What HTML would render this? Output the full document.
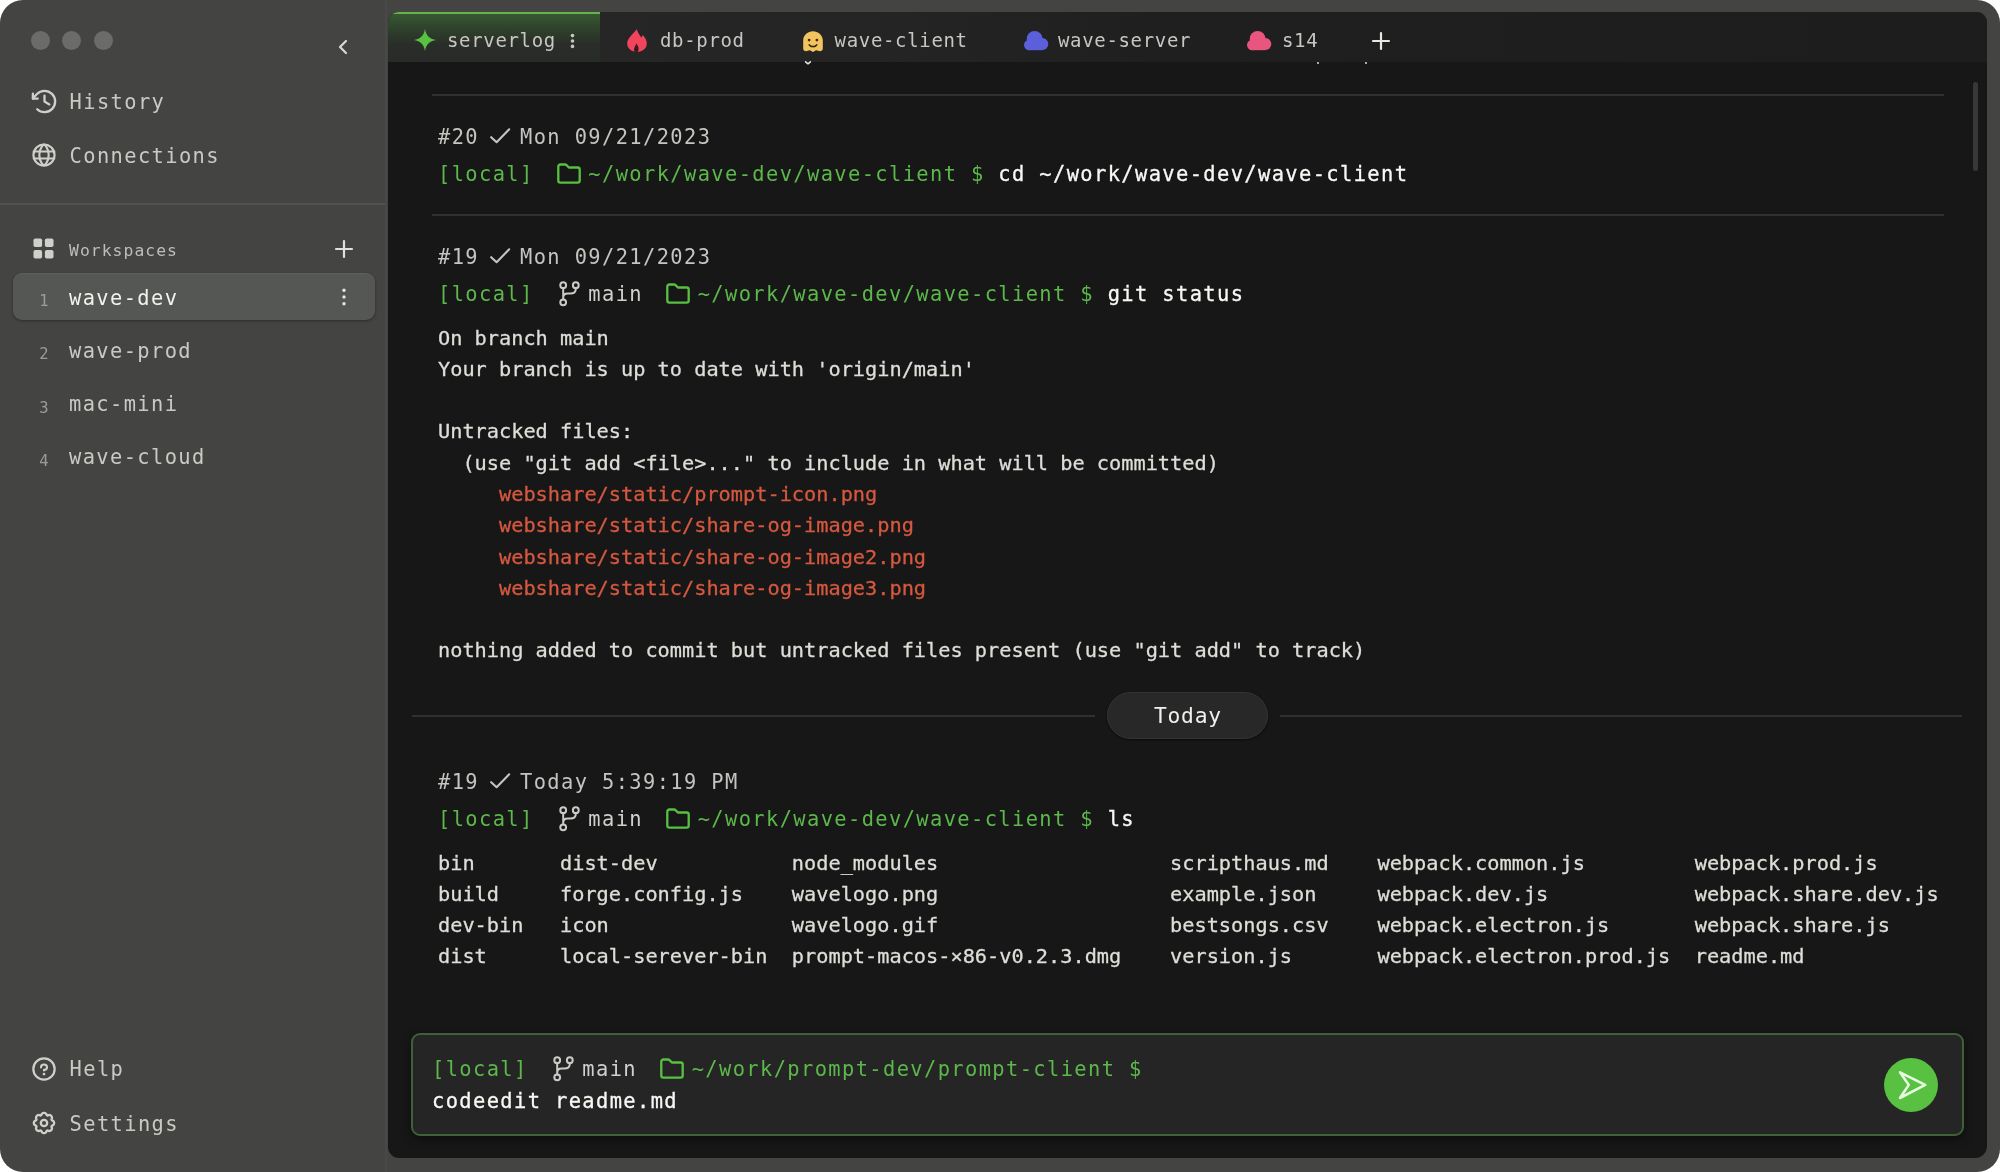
<!DOCTYPE html>
<html lang="en">
<head>
<meta charset="utf-8">
<title>Wave Terminal</title>
<style>
:root{
  --mono:"DejaVu Sans Mono","Liberation Mono",monospace;
  --green:#5cb84a;
  --fg:#d6d6d2;
  --side:#c9c9c5;
}
*{box-sizing:border-box;margin:0;padding:0}
html,body{width:2000px;height:1172px;overflow:hidden;background:#fff}
body{font-family:var(--mono);color:var(--fg);position:relative;-webkit-font-smoothing:antialiased}
.abs{position:absolute}
#win{will-change:transform;position:absolute;left:0;top:0;width:2000px;height:1172px;background:#444442;border-radius:23px;overflow:hidden}
/* ---------- sidebar ---------- */
.dot{position:absolute;width:19px;height:19px;border-radius:50%;background:#6b6b69;top:31px}
.nav{position:absolute;left:69.6px;font-size:20.4px;letter-spacing:1.39px;line-height:30px;height:30px;color:var(--side);white-space:pre}
.ico{position:absolute;overflow:visible}
#sdiv{position:absolute;left:0;top:203px;width:385px;height:2px;background:#52524f}
.wsh{position:absolute;left:69px;top:236.8px;font-size:16.4px;letter-spacing:1.03px;line-height:28px;color:#bdbdb9;white-space:pre}
.ws{position:absolute;left:13px;width:362px;height:47px;border-radius:9px}
.ws.sel{background:#555754;box-shadow:0 1px 3px rgba(0,0,0,.35),inset 0 1px 0 rgba(255,255,255,.06)}
.ws .n{position:absolute;left:24px;top:13.2px;width:14px;text-align:center;font-size:15.5px;line-height:30px;color:#9c9c98}
.ws .t{position:absolute;left:56px;top:9.7px;font-size:20.4px;letter-spacing:1.39px;line-height:30px;color:var(--side);white-space:pre}
.ws.sel .t{color:#f2f2ee}
/* ---------- main ---------- */
#main{position:absolute;left:388px;top:12.4px;width:1598.7px;height:1145.4px;background:#171717;border-radius:11px 11px 12px 11px;overflow:hidden}
#tabs{position:absolute;left:0;top:0;width:1599px;height:50.1px;background:#232323}
#tab1{position:absolute;left:0;top:0;width:212px;height:50.1px;background:linear-gradient(#38582f 0,#34502f 5px,#2e3d2b 18px,#2a2e29 30px,#282a28 50px);border-top:2.2px solid #62b34e}
.tt{position:absolute;top:25px;font-size:19px;letter-spacing:.66px;line-height:30px;color:#c6c6c2;white-space:pre}
.hr{position:absolute;height:1.5px;background:#303030}
.hd{position:absolute;left:438px;font-size:20.4px;letter-spacing:1.39px;line-height:30px;color:#c4c4c0;white-space:pre}
.pr{position:absolute;left:438px;font-size:20.4px;letter-spacing:1.39px;line-height:30px;color:var(--green);white-space:pre}
.pr b,.w{font-weight:normal;color:#f8f8f5;-webkit-text-stroke:.3px currentColor}
.pr i{font-style:normal;color:#d0d0cc}
pre.out{-webkit-text-stroke:.3px currentColor;position:absolute;left:438px;font-family:var(--mono);font-size:20.27px;line-height:31.3px;color:#deded9;white-space:pre}
.red{color:#d5583f}
#today{position:absolute;left:1107px;top:692px;width:161px;height:47px;border-radius:23.5px;background:#282828;box-shadow:0 1px 2px rgba(0,0,0,.5);font-size:21.3px;line-height:46.5px;letter-spacing:.75px;text-indent:.75px;text-align:center;color:#f0f0ec;border:1px solid #343434}
#inp{position:absolute;left:411px;top:1033px;width:1553px;height:103px;border:2px solid #3f6039;border-radius:9px;background:#252525;box-shadow:0 3px 10px rgba(0,0,0,.45)}
#send{position:absolute;left:1884px;top:1057.500px;width:54px;height:54px;border-radius:50%;background:#58c142}
#tabfade{position:absolute;left:212px;top:0;width:1387px;height:50.1px;background:linear-gradient(90deg,#262626 0,#242424 300px,#1f1f1f 560px,#1d1d1d 100%)}
.g4{display:inline-block;position:relative;width:54.68px;height:20px;vertical-align:baseline}
.g3{display:inline-block;position:relative;width:41.01px;height:20px;vertical-align:baseline}
.ck{position:absolute;left:0;top:0}
.fo{position:absolute;left:23.3px;top:2.4px}
.br{position:absolute;left:25.5px;top:0.1px}
</style>
</head>
<body>
<div id="win">

<!-- SIDEBAR -->
<div class="dot" style="left:31px"></div>
<div class="dot" style="left:62px"></div>
<div class="dot" style="left:94px"></div>

<svg class="ico" style="left:335.5px;top:38px" width="14" height="18" viewBox="0 0 14 18"><path d="M10 3 L4 9 L10 15" fill="none" stroke="#d8d8d4" stroke-width="2.2" stroke-linecap="round" stroke-linejoin="round"/></svg>


<svg class="ico" style="left:28.9px;top:85.9px" width="31" height="31" viewBox="0 0 256 256" fill="none" stroke="#cfcfcb" stroke-width="19" stroke-linecap="round" stroke-linejoin="round"><polyline points="128 80 128 128 168 152"/><polyline points="72 104 32 104 32 64"/><path d="M67.6,192A88,88,0,1,0,65.77,65.77C51.79,79.76,42.21,91.24,32,104"/></svg>
<div class="nav" style="top:87px">History</div>
<svg class="ico" style="left:28.7px;top:139.7px" width="30" height="30" viewBox="0 0 256 256" fill="none" stroke="#cfcfcb" stroke-width="18" stroke-linecap="round" stroke-linejoin="round"><circle cx="128" cy="128" r="90"/><path d="M168,128c0,64-40,90-40,90s-40-26-40-90,40-90,40-90S168,64,168,128Z"/><line x1="40" y1="98" x2="216" y2="98"/><line x1="40" y1="158" x2="216" y2="158"/></svg>
<div class="nav" style="top:141px">Connections</div>


<div id="sdiv"></div>
<div class="abs" style="left:385px;top:0;width:2px;height:1172px;background:#494947"></div>


<svg class="ico" style="left:33px;top:238px" width="21" height="21" viewBox="0 0 21 21" fill="#cfcfcb"><rect x="0.5" y="0.5" width="8.6" height="8.6" rx="1.8"/><rect x="11.9" y="0.5" width="8.6" height="8.6" rx="1.8"/><rect x="0.5" y="11.9" width="8.6" height="8.6" rx="1.8"/><rect x="11.9" y="11.9" width="8.6" height="8.6" rx="1.8"/></svg>
<div class="wsh">Workspaces</div>
<svg class="ico" style="left:333.85px;top:238.7px" width="20" height="20" viewBox="0 0 20 20"><path d="M10 2V18M2 10H18" fill="none" stroke="#e0e0dc" stroke-width="2.2" stroke-linecap="round"/></svg>
<div class="ws sel" style="top:273px"><span class="n">1</span><span class="t">wave-dev</span>
<svg class="ico" style="left:326.5px;top:14.3px" width="8" height="20" viewBox="0 0 8 20" fill="#e4e4e0"><circle cx="4" cy="3.2" r="1.7"/><circle cx="4" cy="10" r="1.7"/><circle cx="4" cy="16.8" r="1.7"/></svg></div>
<div class="ws" style="top:326.2px"><span class="n">2</span><span class="t">wave-prod</span></div>
<div class="ws" style="top:379.4px"><span class="n">3</span><span class="t">mac-mini</span></div>
<div class="ws" style="top:432.6px"><span class="n">4</span><span class="t">wave-cloud</span></div>



<svg class="ico" style="left:28.9px;top:1053.9px" width="30" height="30" viewBox="0 0 256 256" fill="none" stroke="#cfcfcb" stroke-width="19" stroke-linecap="round" stroke-linejoin="round"><circle cx="128" cy="128" r="91"/><g transform="translate(128 130) scale(.8) translate(-128 -130)"><path d="M128,144v-8c17.67,0,32-12.54,32-28s-14.33-28-32-28S96,92.540,96,108v4" stroke-width="22"/><circle cx="128" cy="182" r="14" fill="#cfcfcb" stroke="none"/></g></svg>
<div class="nav" style="top:1054.2px">Help</div>
<svg class="ico" style="left:32.1px;top:1110.9px" width="24" height="24" viewBox="0 0 24 24" fill="none" stroke="#cfcfcb" stroke-width="2.3" stroke-linejoin="round"><path d="M22.1 12.0L22.1 12.4L22.0 12.8L21.9 13.2L21.7 13.5L21.4 13.9L21.0 14.2L20.6 14.4L20.0 14.6L19.8 14.9L19.7 15.2L19.5 15.5L19.5 15.8L19.8 16.4L19.9 16.8L20.0 17.3L19.9 17.8L19.8 18.2L19.7 18.5L19.4 18.9L19.2 19.2L18.9 19.4L18.5 19.7L18.2 19.8L17.8 19.9L17.3 20.0L16.8 19.9L16.4 19.8L15.8 19.5L15.5 19.5L15.2 19.7L14.9 19.8L14.6 20.0L14.4 20.6L14.2 21.0L13.9 21.4L13.5 21.7L13.2 21.9L12.8 22.0L12.4 22.1L12.0 22.1L11.6 22.1L11.2 22.0L10.8 21.9L10.5 21.7L10.1 21.4L9.8 21.0L9.6 20.6L9.4 20.0L9.1 19.8L8.8 19.7L8.5 19.5L8.2 19.5L7.6 19.8L7.2 19.9L6.7 20.0L6.2 19.9L5.8 19.8L5.5 19.7L5.1 19.4L4.8 19.2L4.6 18.9L4.3 18.5L4.2 18.2L4.1 17.8L4.0 17.3L4.1 16.8L4.2 16.4L4.5 15.8L4.5 15.5L4.3 15.2L4.2 14.9L4.0 14.6L3.4 14.4L3.0 14.2L2.6 13.9L2.3 13.5L2.1 13.2L2.0 12.8L1.9 12.4L1.8 12.0L1.9 11.6L2.0 11.2L2.1 10.8L2.3 10.5L2.6 10.1L3.0 9.8L3.4 9.6L4.0 9.4L4.2 9.1L4.3 8.8L4.5 8.5L4.5 8.2L4.2 7.6L4.1 7.2L4.0 6.7L4.1 6.2L4.2 5.8L4.3 5.5L4.6 5.1L4.8 4.8L5.1 4.6L5.5 4.3L5.8 4.2L6.2 4.1L6.7 4.0L7.2 4.1L7.6 4.2L8.2 4.5L8.5 4.5L8.8 4.3L9.1 4.2L9.4 4.0L9.6 3.4L9.8 3.0L10.1 2.6L10.5 2.3L10.8 2.1L11.2 2.0L11.6 1.9L12.0 1.8L12.4 1.9L12.8 2.0L13.2 2.1L13.5 2.3L13.9 2.6L14.2 3.0L14.4 3.4L14.6 4.0L14.9 4.2L15.2 4.3L15.5 4.5L15.8 4.5L16.4 4.2L16.8 4.1L17.3 4.0L17.8 4.1L18.2 4.2L18.5 4.3L18.9 4.6L19.2 4.8L19.4 5.1L19.7 5.5L19.8 5.8L19.9 6.2L20.0 6.7L19.9 7.2L19.8 7.6L19.5 8.2L19.5 8.5L19.7 8.8L19.8 9.1L20.0 9.4L20.6 9.6L21.0 9.8L21.4 10.1L21.7 10.5L21.9 10.8L22.0 11.2L22.1 11.6Z"/><circle cx="12" cy="12" r="3.2"/></svg>
<div class="nav" style="top:1109px">Settings</div>


<!-- MAIN -->
<div id="main">
  <div id="tabs">
    <div id="tab1"></div>

    <div id="tabfade"></div>

  </div>

</div>

<!-- tabs -->
<svg class="ico" style="left:413.2px;top:28.35px" width="24" height="24" viewBox="0 0 24 24"><path d="M12 .8C13 7.6 16.4 11 23.2 12C16.4 13 13 16.4 12 23.2C11 16.4 7.6 13 .8 12C7.6 11 11 7.600 12 .8Z" fill="#58c142"/></svg>
<div class="tt" style="left:447px">serverlog</div>
<svg class="ico" style="left:568.5px;top:32px" width="7" height="18" viewBox="0 0 7 18" fill="#c6c6c2"><circle cx="3.5" cy="3.6" r="1.8"/><circle cx="3.5" cy="9" r="1.8"/><circle cx="3.5" cy="14.4" r="1.8"/></svg>
<svg class="ico" style="left:627.3px;top:29.3px" width="20" height="23" viewBox="0 0 20 23"><path d="M9.800 .2C10.500 3.500 12.800 5.800 14.200 8.600C14.900 7.600 15.400 6.900 15.800 6.100C18.200 8.600 19.800 11.600 19.800 14.600C19.800 19.600 15.600 23 10 23C4.400 23 .2 19.600 .2 14.600C.2 9.400 4.500 6.800 9.800 .2Z" fill="#f0455c"/><path d="M7.600 23C6.600 21 7 19 8 17.400C8.600 16.400 9 15.400 9 14.200C10.600 16 11.600 18 11.600 20C11.600 21.200 11.200 22.200 10.600 23Z" fill="#3a1a20"/></svg>
<div class="tt" style="left:660px">db-prod</div>
<svg class="ico" style="left:802.5px;top:30.5px" width="20" height="21.100" viewBox="0 0 20 21.100"><path d="M10 .2C15 .2 19.800 4 19.800 9.500V17.500C19.800 19.300 18.500 20.300 17 20.300C15.500 20.300 14.600 19.300 13.400 19.300C12.200 19.300 11.400 20.900 10 20.900C8.600 20.900 7.800 19.300 6.600 19.300C5.400 19.300 4.500 20.300 3 20.300C1.500 20.300 .2 19.300 .2 17.500V9.500C.2 4 5 .2 10 .2Z" fill="#f2c35f"/><circle cx="6.100" cy="9.100" r="1.400" fill="#3d2a08"/><circle cx="13.900" cy="9.100" r="1.400" fill="#3d2a08"/><path d="M6.300 13.800C7.600 16.300 12.400 16.300 13.700 13.800" fill="none" stroke="#3d2a08" stroke-width="1.700" stroke-linecap="round"/></svg>
<svg class="ico" style="left:804.800px;top:61.300px" width="6" height="4" viewBox="0 0 6 4"><path d="M.6 .8L3 2.800L5.400 .8" fill="none" stroke="#e8e8e8" stroke-width="1.500" stroke-linecap="round" stroke-linejoin="round"/></svg>
<div class="abs" style="left:1317px;top:62px;width:2px;height:2px;border-radius:1px;background:#ddd"></div><div class="abs" style="left:1365px;top:62px;width:2px;height:2px;border-radius:1px;background:#ddd"></div>
<div class="tt" style="left:834.600px">wave-client</div>
<svg class="ico" style="left:1023.8px;top:30.9px" width="24.3" height="19.2" viewBox="0 0 24.3 19.2" fill="#5b60da"><circle cx="5.2" cy="14" r="5.2"/><circle cx="10.6" cy="7.9" r="7.9"/><circle cx="18.4" cy="13" r="5.900"/><rect x="5" y="10" width="13.500" height="9.200"/></svg>
<div class="tt" style="left:1058px">wave-server</div>
<svg class="ico" style="left:1247px;top:30.9px" width="24.3" height="19.2" viewBox="0 0 24.3 19.2" fill="#e8557e"><circle cx="5.2" cy="14" r="5.2"/><circle cx="10.6" cy="7.9" r="7.9"/><circle cx="18.4" cy="13" r="5.900"/><rect x="5" y="10" width="13.500" height="9.200"/></svg>
<div class="tt" style="left:1282px">s14</div>
<svg class="ico" style="left:1372px;top:31.800px" width="18" height="18" viewBox="0 0 18 18"><path d="M9 1V17M1 9H17" fill="none" stroke="#e6e6e2" stroke-width="2.200" stroke-linecap="round"/></svg>

<div class="abs" style="left:1973px;top:82px;width:5px;height:89px;border-radius:2.5px;background:#383838"></div>
<!-- block 1 -->
<div class="hr" style="left:432px;top:94px;width:1512px"></div>
<div class="hd" style="top:121.700px">#20<span class="g3"><svg class="ck" width="41" height="22" viewBox="0 0 41 22"><path d="M12.2 13.2L17.6 18.2L30.2 5.3" fill="none" stroke="#c4c4c0" stroke-width="2.1" stroke-linecap="round" stroke-linejoin="round"/></svg></span>Mon 09/21/2023</div>
<div class="pr" style="top:158.500px">[local]<span class="g4"><svg class="fo" width="24" height="21" viewBox="0 0 24 21"><path d="M1.3 17.5V3.6a2.1 2.1 0 0 1 2.1-2.1h4.6a2.1 2.1 0 0 1 1.5.6l2.4 2.4h8.700a2.1 2.1 0 0 1 2.1 2.1v10.900a2.1 2.1 0 0 1-2.100 2.100H3.400a2.100 2.100 0 0 1-2.100-2.100z" fill="none" stroke="#58c142" stroke-width="2.300" stroke-linejoin="round"/></svg></span>~/work/wave-dev/wave-client $ <b>cd ~/work/wave-dev/wave-client</b></div>

<!-- block 2 -->
<div class="hr" style="left:432px;top:214.300px;width:1512px"></div>
<div class="hd" style="top:241.700px">#19<span class="g3"><svg class="ck" width="41" height="22" viewBox="0 0 41 22"><path d="M12.2 13.2L17.6 18.2L30.2 5.3" fill="none" stroke="#c4c4c0" stroke-width="2.1" stroke-linecap="round" stroke-linejoin="round"/></svg></span>Mon 09/21/2023</div>
<div class="pr" style="top:278.700px">[local]<span class="g4"><svg class="br" width="22" height="26" viewBox="0 0 22 26"><g fill="none" stroke="#cbcbc7" stroke-width="2" stroke-linecap="round"><circle cx="4.200" cy="4.200" r="2.900"/><circle cx="4.200" cy="21.300" r="2.900"/><circle cx="16.800" cy="4.200" r="2.900"/><path d="M4.200 7.100V18.400M16.800 7.100v.9c0 3.200-2 4.600-5.600 4.600h-2.400c-3 0-4.600 1.600-4.600 4.200"/></g></svg></span><i>main</i><span class="g4"><svg class="fo" width="24" height="21" viewBox="0 0 24 21"><path d="M1.3 17.5V3.6a2.1 2.1 0 0 1 2.1-2.1h4.6a2.1 2.1 0 0 1 1.5.6l2.4 2.4h8.700a2.1 2.1 0 0 1 2.1 2.1v10.900a2.1 2.1 0 0 1-2.100 2.100H3.400a2.100 2.100 0 0 1-2.100-2.100z" fill="none" stroke="#58c142" stroke-width="2.300" stroke-linejoin="round"/></svg></span>~/work/wave-dev/wave-client $ <b>git status</b></div>
<pre class="out" style="top:322.500px">On branch main
Your branch is up to date with 'origin/main'

Untracked files:
  (use "git add &lt;file&gt;..." to include in what will be committed)
<span class="red">     webshare/static/prompt-icon.png
     webshare/static/share-og-image.png
     webshare/static/share-og-image2.png
     webshare/static/share-og-image3.png</span>

nothing added to commit but untracked files present (use "git add" to track)</pre>

<!-- today -->
<div class="hr" style="left:412px;top:715.300px;width:683px"></div>
<div class="hr" style="left:1280px;top:715.300px;width:682px"></div>
<div id="today">Today</div>

<!-- block 3 -->
<div class="hd" style="top:766.700px">#19<span class="g3"><svg class="ck" width="41" height="22" viewBox="0 0 41 22"><path d="M12.2 13.2L17.6 18.2L30.2 5.3" fill="none" stroke="#c4c4c0" stroke-width="2.1" stroke-linecap="round" stroke-linejoin="round"/></svg></span>Today 5:39:19 PM</div>
<div class="pr" style="top:803.700px">[local]<span class="g4"><svg class="br" width="22" height="26" viewBox="0 0 22 26"><g fill="none" stroke="#cbcbc7" stroke-width="2" stroke-linecap="round"><circle cx="4.200" cy="4.200" r="2.900"/><circle cx="4.200" cy="21.300" r="2.900"/><circle cx="16.800" cy="4.200" r="2.900"/><path d="M4.200 7.100V18.400M16.800 7.100v.9c0 3.200-2 4.600-5.600 4.600h-2.400c-3 0-4.600 1.600-4.600 4.200"/></g></svg></span><i>main</i><span class="g4"><svg class="fo" width="24" height="21" viewBox="0 0 24 21"><path d="M1.3 17.5V3.6a2.1 2.1 0 0 1 2.1-2.1h4.6a2.1 2.1 0 0 1 1.5.6l2.4 2.4h8.700a2.1 2.1 0 0 1 2.1 2.1v10.900a2.1 2.1 0 0 1-2.100 2.100H3.400a2.100 2.100 0 0 1-2.100-2.100z" fill="none" stroke="#58c142" stroke-width="2.300" stroke-linejoin="round"/></svg></span>~/work/wave-dev/wave-client $ <b>ls</b></div>
<pre class="out" style="top:847.500px">bin       dist-dev           node_modules                   scripthaus.md    webpack.common.js         webpack.prod.js
build     forge.config.js    wavelogo.png                   example.json     webpack.dev.js            webpack.share.dev.js
dev-bin   icon               wavelogo.gif                   bestsongs.csv    webpack.electron.js       webpack.share.js
dist      local-serever-bin  prompt-macos-×86-v0.2.3.dmg    version.js       webpack.electron.prod.js  readme.md</pre>

<!-- input -->
<div id="inp"></div>
<div class="pr" style="left:432px;top:1054px">[local]<span class="g4"><svg class="br" width="22" height="26" viewBox="0 0 22 26"><g fill="none" stroke="#cbcbc7" stroke-width="2" stroke-linecap="round"><circle cx="4.200" cy="4.200" r="2.900"/><circle cx="4.200" cy="21.300" r="2.900"/><circle cx="16.800" cy="4.200" r="2.900"/><path d="M4.200 7.100V18.400M16.800 7.100v.9c0 3.200-2 4.600-5.600 4.600h-2.400c-3 0-4.600 1.600-4.600 4.200"/></g></svg></span><i>main</i><span class="g4"><svg class="fo" width="24" height="21" viewBox="0 0 24 21"><path d="M1.3 17.5V3.6a2.1 2.1 0 0 1 2.1-2.1h4.6a2.1 2.1 0 0 1 1.5.6l2.4 2.4h8.700a2.1 2.1 0 0 1 2.1 2.1v10.900a2.1 2.1 0 0 1-2.100 2.100H3.400a2.100 2.100 0 0 1-2.100-2.100z" fill="none" stroke="#58c142" stroke-width="2.300" stroke-linejoin="round"/></svg></span>~/work/prompt-dev/prompt-client $</div>
<div class="pr" style="left:432px;top:1085.500px"><b>codeedit readme.md</b></div>
<div id="send"><svg class="ico" style="left:0;top:0" width="54" height="54" viewBox="0 0 54 54"><path d="M16 14.300 L41.200 26.900 L16 40 L24.800 26.900 Z" fill="none" stroke="#e6fadf" stroke-width="2.600" stroke-linejoin="round"/></svg></div>

</div>
</body>
</html>
